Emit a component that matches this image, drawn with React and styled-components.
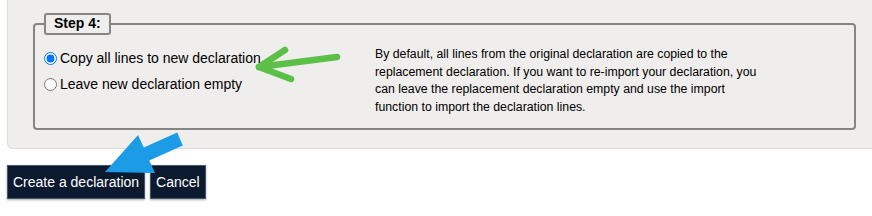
import { styled, createGlobalStyle } from "styled-components";

const GlobalStyle = createGlobalStyle`
  html, body {
    margin: 0;
    padding: 0;
    background: #ffffff;
    font-family: "Liberation Sans", Arial, sans-serif;
  }
`;

const Page = styled.div`
  position: relative;
  width: 872px;
  height: 216px;
  overflow: hidden;
`;

const Panel = styled.div`
  margin-left: 7px;
  padding: 13px 16px 18px 25px;
  background: #efeeec;
  border-left: 1px solid #dcdcdc;
  border-bottom: 1px solid #dcdcdc;
  border-bottom-left-radius: 6px;
`;

const Fieldset = styled.fieldset`
  margin: 0;
  padding: 0 9px 12px 9px;
  border: 2px solid #858585;
  border-radius: 4px;
  min-width: 0;
  display: flex;
  align-items: flex-start;
`;

const Legend = styled.legend`
  padding: 1px 8px 2px 8px;
  margin: 0;
  border: 2px solid #858585;
  border-radius: 3px;
  background: #efeeec;
  font-weight: bold;
  font-size: 14px;
  line-height: 15px;
  color: #000;
`;

const Options = styled.div`
  width: 331px;
  flex: none;
  display: flex;
  flex-direction: column;
  gap: 8px;
  padding-top: 14px;
`;

const OptionRow = styled.label`
  display: flex;
  align-items: center;
  gap: 3px;
  font-size: 14px;
  line-height: 18px;
  color: #000;
`;

const Radio = styled.input`
  margin: 0;
  width: 13px;
  height: 13px;
  accent-color: #0075ff;
`;

const Help = styled.p`
  margin: 11px 0 0 0;
  width: 395px;
  font-size: 12.3px;
  line-height: 17.5px;
  color: #000;
`;

const Actions = styled.div`
  display: flex;
  gap: 5px;
  margin: 16px 0 0 7px;
`;

const Button = styled.button`
  height: 34px;
  padding: 0 5px;
  background: #0c1a2f;
  color: #ffffff;
  border: 1px solid #44556c;
  box-shadow: 0 1px 2px rgba(0, 0, 0, 0.35);
  font-family: "Liberation Sans", Arial, sans-serif;
  font-size: 14px;
`;

const Overlay = styled.svg`
  position: absolute;
  left: 0;
  top: 0;
  pointer-events: none;
`;

export default function App() {
  return (
    <Page>
      <GlobalStyle />
      <Panel>
        <Fieldset>
          <Legend>Step 4:</Legend>
          <Options>
            <OptionRow>
              <Radio type="radio" name="lines" defaultChecked />
              Copy all lines to new declaration
            </OptionRow>
            <OptionRow>
              <Radio type="radio" name="lines" />
              Leave new declaration empty
            </OptionRow>
          </Options>
          <Help>
            By default, all lines from the original declaration are copied to the
            replacement declaration. If you want to re-import your declaration, you
            can leave the replacement declaration empty and use the import
            function to import the declaration lines.
          </Help>
        </Fieldset>
      </Panel>
      <Actions>
        <Button>Create a declaration</Button>
        <Button>Cancel</Button>
      </Actions>
      <Overlay width="872" height="216" viewBox="0 0 872 216">
        <g
          stroke="#5cbf48"
          strokeWidth="6.5"
          strokeLinecap="round"
          strokeLinejoin="round"
          fill="none"
        >
          <path d="M337 57 L259 67" />
          <path d="M285 50 L259 67 L291 79" />
        </g>
        <polygon
          fill="#1c9ce6"
          points="105,172 138,135 143.8,147.6 177.2,132.6 182.8,145.4 149.3,160.4 155,173"
        />
      </Overlay>
    </Page>
  );
}
